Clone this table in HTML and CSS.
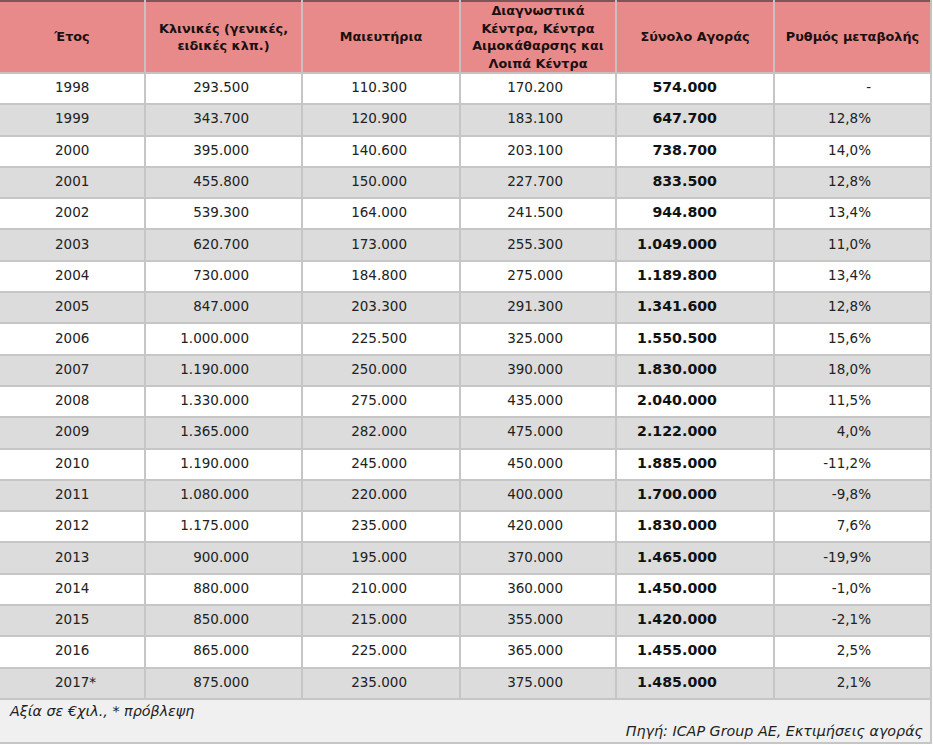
FILE: index.html
```html
<!DOCTYPE html>
<html lang="el">
<head>
<meta charset="utf-8">
<title>Αγορά</title>
<link rel="stylesheet" href="styles.css">
</head>
<body>
<table class="market">
  <colgroup>
    <col class="c1"><col class="c2"><col class="c3"><col class="c4"><col class="c5"><col class="c6">
  </colgroup>
  <thead>
    <tr>
      <th>Έτος</th>
      <th>Κλινικές (γενικές,<br>ειδικές κλπ.)</th>
      <th>Μαιευτήρια</th>
      <th>Διαγνωστικά<br>Κέντρα, Κέντρα<br>Αιμοκάθαρσης και<br>Λοιπά Κέντρα</th>
      <th>Σύνολο Αγοράς</th>
      <th>Ρυθμός μεταβολής</th>
    </tr>
  </thead>
  <tbody>
    <tr><td class="yr">1998</td><td class="num">293.500</td><td class="num">110.300</td><td class="num">170.200</td><td class="tot">574.000</td><td class="rate">-</td></tr>
    <tr><td class="yr">1999</td><td class="num">343.700</td><td class="num">120.900</td><td class="num">183.100</td><td class="tot">647.700</td><td class="rate">12,8%</td></tr>
    <tr><td class="yr">2000</td><td class="num">395.000</td><td class="num">140.600</td><td class="num">203.100</td><td class="tot">738.700</td><td class="rate">14,0%</td></tr>
    <tr><td class="yr">2001</td><td class="num">455.800</td><td class="num">150.000</td><td class="num">227.700</td><td class="tot">833.500</td><td class="rate">12,8%</td></tr>
    <tr><td class="yr">2002</td><td class="num">539.300</td><td class="num">164.000</td><td class="num">241.500</td><td class="tot">944.800</td><td class="rate">13,4%</td></tr>
    <tr><td class="yr">2003</td><td class="num">620.700</td><td class="num">173.000</td><td class="num">255.300</td><td class="tot">1.049.000</td><td class="rate">11,0%</td></tr>
    <tr><td class="yr">2004</td><td class="num">730.000</td><td class="num">184.800</td><td class="num">275.000</td><td class="tot">1.189.800</td><td class="rate">13,4%</td></tr>
    <tr><td class="yr">2005</td><td class="num">847.000</td><td class="num">203.300</td><td class="num">291.300</td><td class="tot">1.341.600</td><td class="rate">12,8%</td></tr>
    <tr><td class="yr">2006</td><td class="num">1.000.000</td><td class="num">225.500</td><td class="num">325.000</td><td class="tot">1.550.500</td><td class="rate">15,6%</td></tr>
    <tr><td class="yr">2007</td><td class="num">1.190.000</td><td class="num">250.000</td><td class="num">390.000</td><td class="tot">1.830.000</td><td class="rate">18,0%</td></tr>
    <tr><td class="yr">2008</td><td class="num">1.330.000</td><td class="num">275.000</td><td class="num">435.000</td><td class="tot">2.040.000</td><td class="rate">11,5%</td></tr>
    <tr><td class="yr">2009</td><td class="num">1.365.000</td><td class="num">282.000</td><td class="num">475.000</td><td class="tot">2.122.000</td><td class="rate">4,0%</td></tr>
    <tr><td class="yr">2010</td><td class="num">1.190.000</td><td class="num">245.000</td><td class="num">450.000</td><td class="tot">1.885.000</td><td class="rate">-11,2%</td></tr>
    <tr><td class="yr">2011</td><td class="num">1.080.000</td><td class="num">220.000</td><td class="num">400.000</td><td class="tot">1.700.000</td><td class="rate">-9,8%</td></tr>
    <tr><td class="yr">2012</td><td class="num">1.175.000</td><td class="num">235.000</td><td class="num">420.000</td><td class="tot">1.830.000</td><td class="rate">7,6%</td></tr>
    <tr><td class="yr">2013</td><td class="num">900.000</td><td class="num">195.000</td><td class="num">370.000</td><td class="tot">1.465.000</td><td class="rate">-19,9%</td></tr>
    <tr><td class="yr">2014</td><td class="num">880.000</td><td class="num">210.000</td><td class="num">360.000</td><td class="tot">1.450.000</td><td class="rate">-1,0%</td></tr>
    <tr><td class="yr">2015</td><td class="num">850.000</td><td class="num">215.000</td><td class="num">355.000</td><td class="tot">1.420.000</td><td class="rate">-2,1%</td></tr>
    <tr><td class="yr">2016</td><td class="num">865.000</td><td class="num">225.000</td><td class="num">365.000</td><td class="tot">1.455.000</td><td class="rate">2,5%</td></tr>
    <tr><td class="yr">2017*</td><td class="num">875.000</td><td class="num">235.000</td><td class="num">375.000</td><td class="tot">1.485.000</td><td class="rate">2,1%</td></tr>
  </tbody>
  <tfoot>
    <tr>
      <td colspan="6" class="notes">
        <div class="note-left">Αξία σε €χιλ., * πρόβλεψη</div>
        <div class="note-right">Πηγή: ICAP Group AE, Εκτιμήσεις αγοράς</div>
      </td>
    </tr>
  </tfoot>
</table>
</body>
</html>
```
FILE: styles.css
```css
html, body {
  margin: 0;
  padding: 0;
  background: #ffffff;
}
body {
  font-family: "DejaVu Sans", sans-serif;
  font-size: 13.5px;
  color: #222222;
}
.market {
  width: 931px;
  border-collapse: collapse;
  table-layout: fixed;
  border-top: 2px solid #7d5656;
}
.c1 { width: 145px; }
.c2 { width: 157px; }
.c3 { width: 158px; }
.c4 { width: 156px; }
.c5 { width: 158px; }
.c6 { width: 157px; }

.market th {
  background: #e88a8a;
  color: #1a1010;
  font-weight: bold;
  font-size: 12.8px;
  line-height: 17.5px;
  height: 70px;
  padding: 0 2px;
  text-align: center;
  vertical-align: middle;
  border: 2px solid #c9c0c0;
  border-top: none;
}
.market td {
  height: 26.3px;
  padding: 0 0 3px;
  border: 2px solid #c6c6c6;
  vertical-align: middle;
  line-height: 16px;
}
.market tbody tr:nth-child(even) td {
  background: #dcdcdc;
}
.market td.yr { text-align: left; padding-left: 55px; }
.market td.num { text-align: right; padding-right: 52px; }
.market td.tot { text-align: right; padding-right: 56px; font-weight: bold; font-size: 14.2px; color: #111111; }
.market td.rate { text-align: right; padding-right: 59px; }

.market td.notes {
  background: #f0f0f0;
  height: 42px;
  padding: 0 7px 0 10px;
  font-style: italic;
  font-size: 14.3px;
  vertical-align: top;
  line-height: 17px;
}
.note-left {
  text-align: left;
  padding-top: 3px;
}
.note-right {
  text-align: right;
  padding-top: 3px;
}
.market th:first-child, .market td:first-child { border-left: none; }
```
